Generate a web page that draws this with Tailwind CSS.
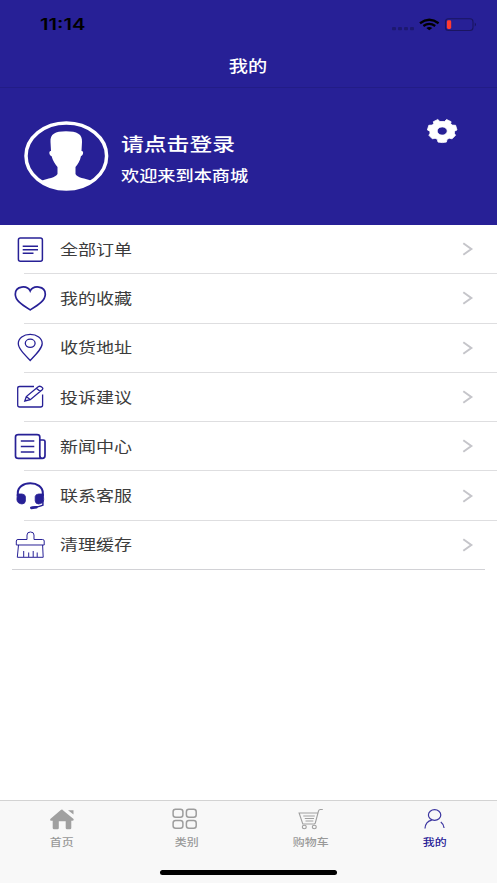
<!DOCTYPE html>
<html lang="zh-CN">
<head>
<meta charset="utf-8">
<title>我的</title>
<script src="https://cdn.jsdelivr.net/npm/@tailwindcss/browser@4"></script>
</head>
<body class="bg-white">
<div class="flex h-[883px] w-[497px] flex-col overflow-hidden bg-white font-['Noto_Sans_CJK_SC',sans-serif] text-[#3c3c3c]">
  <header class="h-[87.500px] shrink-0 border-b border-[#221c86] bg-[#272096]">
    <div class="flex h-[48px] items-center justify-between pl-[40px] pr-[20px]">
      <span class="origin-left scale-x-[1.3] pt-[2px] font-['Inter',sans-serif] text-[15.500px] font-semibold leading-none text-black">11:14</span>
      <svg class="h-[20px] w-[87px]" viewBox="390 14 87 20" fill="none">
        <g fill="#1d1870"><rect x="392" y="27" width="4" height="3.200" rx="1"/><rect x="398" y="27" width="4" height="3.200" rx="1"/><rect x="404" y="27" width="4" height="3.200" rx="1"/><rect x="410" y="27" width="4" height="3.200" rx="1"/></g>
        <g stroke="#000" stroke-width="2.300"><path d="M420 23.200Q429.300 16.400 438.600 23.200"/><path d="M423.400 26Q429.300 21.700 435.200 26"/></g>
        <path d="M426.300 28Q429.300 26 432.300 28L429.300 30.300Z" fill="#000"/>
        <rect x="445.500" y="18.700" width="27.500" height="11.800" rx="3" stroke="#1a1560" stroke-width="1.100"/>
        <rect x="446.900" y="20.300" width="4.300" height="8.700" rx="1.400" fill="#ff3b30"/>
        <path d="M474.800 22.600Q476.800 24.600 474.800 26.600Z" fill="#151050"/>
      </svg>
    </div>
    <h1 class="flex h-[33px] items-center justify-center text-[16px] leading-none text-white"><span class="scale-x-[1.2] font-medium">我的</span></h1>
  </header>

  <section class="flex h-[137px] shrink-0 bg-[#272096] pl-[24px] text-white">
    <svg class="mt-[33.500px] h-[70px] w-[85px] shrink-0" viewBox="0 0 85 70">
      <ellipse cx="42.300" cy="35" rx="40.300" ry="33" fill="none" stroke="#fff" stroke-width="3.500"/>
      <path d="M26.500 21C26 13 31 10.200 42 10.200S58.500 13 58 21L57.500 30C60 29.500 59.500 34.500 57 35C56 40 54 43 51.500 46V53C53 57 61 57 68 60C60 66 52 68.500 42.300 68.500S24 66 17 60C24 57 31.500 57 33.500 53V46C31 43 29 40 27.500 35C25 34.500 24.500 29.500 27 30Z" fill="#fff"/>
    </svg>
    <div class="flex grow flex-col pl-[11.500px] pt-[43.500px]">
      <span class="origin-left scale-x-[1.22] self-start text-[18.700px] font-medium leading-[24px]">请点击登录</span>
      <span class="mt-[9px] origin-left scale-x-[1.22] self-start text-[14.900px] font-medium leading-[22px]">欢迎来到本商城</span>
    </div>
    <svg class="mr-[39px] mt-[30.500px] h-[27px] w-[32px]" viewBox="0 0 32 27" fill="#fff">
      <path fill-rule="evenodd" stroke="#fff" stroke-width=".8" stroke-linejoin="round" d="M11.800 1.500L7.300 3.700L7.700 5.600L6.200 7.100L2.800 7.300L1.400 11.900L3.900 13.200L4 15.300L2.900 17.300L6.300 20.800L9.100 20.300L11.300 21.300L12 24.100L16.200 24.600L20.400 24.100L21.100 21.300L23.300 20.300L26.100 20.800L29.500 17.300L28.400 15.300L28.500 13.200L31 11.900L29.600 7.300L26.200 7.100L24.700 5.600L25.100 3.700L20.600 1.500L18.500 3.500H13.900ZM16.200 8.900A5 4.100 0 1 0 16.210 8.900Z"/>
    </svg>
  </section>

  <main class="grow">
    <ul class="text-[14.900px] leading-none">
      <li class="flex h-[49.300px] items-center">
        <svg class="mr-[0.400px] h-[49.300px] w-[60px] shrink-0" viewBox="0 0 60 49.300" fill="none" stroke="#272096" stroke-width="1.500"><rect x="18.400" y="13" width="24" height="23.200" rx="2"/><path d="M22.700 21.200H38M22.700 24.700H38M22.700 28.200H33.500"/></svg>
        <span class="origin-left scale-x-[1.21]">全部订单</span>
        <svg class="ml-auto mr-[23px] h-[14px] w-[12px]" viewBox="0 0 12 14" fill="none" stroke="#c5c5ca" stroke-width="2"><path d="M1.300 1.300L9.300 7L1.300 12.700"/></svg>
      </li>
      <li class="relative flex h-[49.300px] items-center before:absolute before:left-[24px] before:right-0 before:top-[-0.500px] before:h-px before:bg-[#dedee0]">
        <svg class="mr-[0.400px] h-[49.300px] w-[60px] shrink-0" viewBox="0 0 60 49.300" fill="none" stroke="#272096" stroke-width="1.700"><path d="M30.200 17C27.500 11.200 15.300 11.200 15.300 20.200C15.300 26.200 21 30.200 30.200 35.900C39.500 30.200 45.300 26.200 45.300 20.200C45.300 11.200 33 11.200 30.200 17Z"/></svg>
        <span class="origin-left scale-x-[1.21]">我的收藏</span>
        <svg class="ml-auto mr-[23px] h-[14px] w-[12px]" viewBox="0 0 12 14" fill="none" stroke="#c5c5ca" stroke-width="2"><path d="M1.300 1.300L9.300 7L1.300 12.700"/></svg>
      </li>
      <li class="relative flex h-[49.300px] items-center before:absolute before:left-[24px] before:right-0 before:top-[-0.500px] before:h-px before:bg-[#dedee0]">
        <svg class="mr-[0.400px] h-[49.300px] w-[60px] shrink-0" viewBox="0 0 60 49.300" fill="none" stroke="#272096" stroke-width="1.300"><path d="M30.200 37.500C23 30 18.300 25 18.300 20.500C18.300 15.200 23.500 11.300 30.200 11.300S42.200 15.200 42.200 20.500C42.200 25 37.500 30 30.200 37.500Z"/><ellipse cx="30.200" cy="20.300" rx="4.900" ry="4.100"/></svg>
        <span class="origin-left scale-x-[1.21]">收货地址</span>
        <svg class="ml-auto mr-[23px] h-[14px] w-[12px]" viewBox="0 0 12 14" fill="none" stroke="#c5c5ca" stroke-width="2"><path d="M1.300 1.300L9.300 7L1.300 12.700"/></svg>
      </li>
      <li class="relative flex h-[49.300px] items-center before:absolute before:left-[24px] before:right-0 before:top-[-0.500px] before:h-px before:bg-[#dedee0]">
        <svg class="mr-[0.400px] h-[49.300px] w-[60px] shrink-0" viewBox="0 0 60 49.300" fill="none" stroke="#272096" stroke-width="1.300"><path d="M34 14.500H19.700Q17.700 14.500 17.700 16.200V33.300Q17.700 35 19.700 35H40.600Q42.600 35 42.600 33.300V22.500"/><path d="M24.800 29L26.300 24.600L38.200 14.800Q39.500 13.800 41 14.600L42.200 15.500Q43.500 16.500 42.200 17.800L30.300 27.700ZM26.300 24.600L30.300 27.700M36.300 16.300L40.300 19.400"/></svg>
        <span class="origin-left scale-x-[1.21]">投诉建议</span>
        <svg class="ml-auto mr-[23px] h-[14px] w-[12px]" viewBox="0 0 12 14" fill="none" stroke="#c5c5ca" stroke-width="2"><path d="M1.300 1.300L9.300 7L1.300 12.700"/></svg>
      </li>
      <li class="relative flex h-[49.300px] items-center before:absolute before:left-[24px] before:right-0 before:top-[-0.500px] before:h-px before:bg-[#dedee0]">
        <svg class="mr-[0.400px] h-[49.300px] w-[60px] shrink-0" viewBox="0 0 60 49.300" fill="none" stroke="#272096" stroke-width="1.700"><path d="M42 36.400H18.500Q15.500 36.400 15.500 34V15Q15.500 12.700 18.500 12.700H37Q39.800 12.700 39.800 15V33.500Q39.800 36.400 42.300 36.400Q45 36.400 45 33.500V19.500Q45 18 43.300 18H40M20.800 19H34.300M20.800 24.500H34.300M20.800 30H34.300"/></svg>
        <span class="origin-left scale-x-[1.21]">新闻中心</span>
        <svg class="ml-auto mr-[23px] h-[14px] w-[12px]" viewBox="0 0 12 14" fill="none" stroke="#c5c5ca" stroke-width="2"><path d="M1.300 1.300L9.300 7L1.300 12.700"/></svg>
      </li>
      <li class="relative flex h-[49.300px] items-center before:absolute before:left-[24px] before:right-0 before:top-[-0.500px] before:h-px before:bg-[#dedee0]">
        <svg class="mr-[0.400px] h-[49.300px] w-[60px] shrink-0" viewBox="0 0 60 49.300" fill="none" stroke="#272096" stroke-width="2"><path d="M17.800 25V22C17.800 16 23.500 12.200 30.300 12.200S42.800 16 42.800 22V25"/><path d="M17.300 23H22Q25 23.200 25.400 25.500V30Q25 33 22 33Q17.100 32.500 16.900 28.500ZM43.300 23H38.600Q35.600 23.200 35.200 25.500V30Q35.600 33 38.600 33Q43.500 32.500 43.700 28.500Z" fill="#272096" stroke-width=".8"/><path d="M42.900 29V34.200Q39.500 36 32 36.400" stroke-width="1.500"/><path d="M31.300 36.900L36.500 36.200" stroke-width="2.600" stroke-linecap="round"/></svg>
        <span class="origin-left scale-x-[1.21]">联系客服</span>
        <svg class="ml-auto mr-[23px] h-[14px] w-[12px]" viewBox="0 0 12 14" fill="none" stroke="#c5c5ca" stroke-width="2"><path d="M1.300 1.300L9.300 7L1.300 12.700"/></svg>
      </li>
      <li class="relative flex h-[49.300px] items-center before:absolute before:left-[24px] before:right-0 before:top-[-0.500px] before:h-px before:bg-[#dedee0] after:absolute after:bottom-0 after:left-[12px] after:right-[12px] after:h-px after:bg-[#d2d2d6]">
        <svg class="mr-[0.400px] h-[49.300px] w-[60px] shrink-0" viewBox="0 0 60 49.300" fill="none" stroke="#272096" stroke-width="1"><path d="M27 19.500V15Q27 12 30.500 12T34 15V19.500H42.500Q44.200 19.500 44.200 21V25H16.300V21Q16.300 19.500 18 19.500ZM18.500 25L17.300 37.300H43.200L42.600 25M23.700 37V31M28.700 37V32.500M33.200 37V31M37.200 37V32.500"/></svg>
        <span class="origin-left scale-x-[1.21]">清理缓存</span>
        <svg class="ml-auto mr-[23px] h-[14px] w-[12px]" viewBox="0 0 12 14" fill="none" stroke="#c5c5ca" stroke-width="2"><path d="M1.300 1.300L9.300 7L1.300 12.700"/></svg>
      </li>
    </ul>
  </main>

  <footer class="flex h-[83px] shrink-0 flex-col border-t border-[#d3d3d3] bg-[#f8f8f8]">
    <nav class="grid h-[69px] grid-cols-4 text-[9.800px] font-medium leading-[14px] text-[#999]">
      <a class="flex flex-col items-center pt-[7px]">
        <svg class="h-[24px] w-[28px]" viewBox="0 0 28 24" fill="#a0a0a0"><path d="M14 1.500L25.600 11Q26.300 12.500 24.500 12.700H23.300V20Q23.300 21.300 22 21.300H19Q17.700 21.300 17.700 20V13.300H10.800V20Q10.800 21.300 9.500 21.300H6Q4.700 21.300 4.700 20V12.700H3Q1.500 12.500 2.300 11L12.500 2.200Q14 1 15.500 2.200ZM20 2.300H25.500V6.500Z"/></svg>
        <span class="mt-[3px] scale-x-[1.22]">首页</span>
      </a>
      <a class="flex flex-col items-center pt-[7px]">
        <svg class="h-[24px] w-[28px]" viewBox="0.300 0 28 24" fill="none" stroke="#9d9d9d" stroke-width="1.500"><rect x="1.400" y="1.300" width="9.800" height="7.900" rx="2.500"/><rect x="14.700" y="1.300" width="9.800" height="7.900" rx="2.500"/><rect x="1.400" y="12.400" width="9.800" height="7.900" rx="2.500"/><rect x="14.700" y="12.400" width="9.800" height="7.900" rx="2.500"/></svg>
        <span class="mt-[3px] scale-x-[1.22]">类别</span>
      </a>
      <a class="flex flex-col items-center pt-[7px]">
        <svg class="h-[24px] w-[28px]" viewBox="0.700 0 28 24" fill="none" stroke="#a0a0a0" stroke-width="1.100"><path d="M26.500 1.500H24Q22.700 1.500 22.200 3L19 15Q18.700 16 17.500 16H6.500L2.800 5H21.500M7 8H18.500M8.500 10.500H17.700M9.200 13H17"/><ellipse cx="8" cy="19" rx="2" ry="1.700"/><ellipse cx="18" cy="19" rx="2" ry="1.700"/></svg>
        <span class="mt-[3px] scale-x-[1.22]">购物车</span>
      </a>
      <a class="flex flex-col items-center pt-[7px] text-[#272096]">
        <svg class="h-[24px] w-[28px]" viewBox="0.700 0 28 24" fill="none" stroke="#3c36a0" stroke-width="1.200"><ellipse cx="14.300" cy="7" rx="6.200" ry="5.300"/><path d="M4.700 20.500C5 16 7.500 13 11.500 12.200M20.500 14Q23.300 16 23.800 20"/></svg>
        <span class="mt-[3px] scale-x-[1.22]">我的</span>
      </a>
    </nav>
    <div class="mx-auto h-[5px] w-[177px] rounded-full bg-black"></div>
  </footer>
</div>
</body>
</html>
